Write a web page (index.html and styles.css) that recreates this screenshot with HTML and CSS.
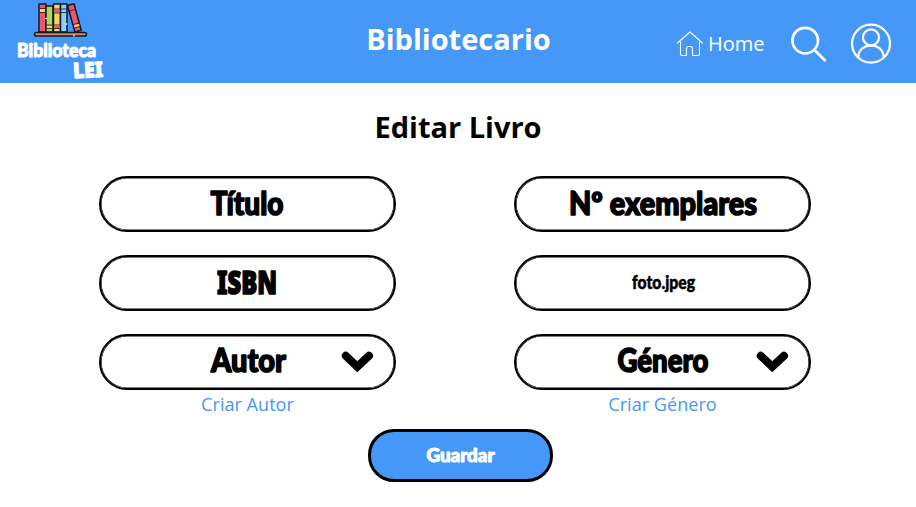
FILE: index.html
```html
<!DOCTYPE html>
<html lang="pt">
<head>
<meta charset="UTF-8">
<title>Editar Livro</title>
<link rel="stylesheet" href="styles.css">
</head>
<body>
<header class="topbar">
  <a class="brand">
    <svg width="120" height="83" viewBox="0 0 120 83">
      <g stroke="#111827" stroke-width="1.5" stroke-linejoin="round">
        <path fill="#ef5470" d="M39 4h7v28h-7z"/>
        <path fill="#acd957" d="M46 6h7v26h-7z"/>
        <path fill="#ffd25a" d="M53.5 4h7v28h-7z"/>
        <path fill="#8fd0f5" d="M60.500 4h6.500v28h-6.500z"/>
        <path fill="#ef5470" d="M67.500 5.500l6.500-1.700 7.200 26.500-6.300 1.700z"/>
        <rect fill="#d18b55" x="34.500" y="32.500" width="52" height="3.600" rx="1.800"/>
      </g>
      <path fill="#ffd25a" d="M40 9h5v3h-5zM47 26h5v2h-5zM74 25l5-1.300.7 2.500-5 1.300z"/>
      <path fill="#ef5470" d="M54.300 10h5.500v2.500h-5.500zM54.300 26h5.500v2h-5.500z"/>
      <path stroke="#111827" stroke-width=".8" d="M40 8.500h5M40 12.500h5M47 25h5M47 28.500h5M54 9h6M54 13h6M54 25h6M54 28.500h6M61 9h6M61 12.500h6M70 11l5-1.500M73.500 24.500l5.500-1.500M74.500 28l5.500-1.500"/>
      <path fill="#fff" d="M46 17.500l1.500 1-1.500 1-1-1zM66.500 23l1 1-1 1-1-1zM74 34.500l1 1.300-1 1-1-1z"/>
      <g class="hand light">
        <text x="17" y="57" font-size="19.500" textLength="79" lengthAdjust="spacingAndGlyphs">Biblioteca</text>
        <text class="slab" x="73" y="77.500" font-size="21.500" textLength="30" lengthAdjust="spacingAndGlyphs" transform="rotate(-3 88 70)">LEI</text>
      </g>
    </svg>
  </a>
  <div class="area">Bibliotecario</div>
  <nav class="nav">
    <a class="home">
      <svg width="28" height="28" viewBox="0 0 28 28" fill="none" stroke="#fff" stroke-width="1.100" stroke-linejoin="round" stroke-linecap="round"><path d="M1.500 13L14 2l12.500 11M4.500 12v12q0 1.500 1.500 1.500h4.500v-7q0-2 2-2h2q2 0 2 2v7H22q1.500 0 1.500-1.500V12"/></svg>
      <span>Home</span>
    </a>
    <svg class="search" width="38" height="38" viewBox="0 0 38 38" fill="none" stroke="#fff" stroke-width="2.700" stroke-linecap="round"><circle cx="15.200" cy="15.600" r="12.800"/><path d="M24.500 25l10.300 10.300"/></svg>
    <svg class="user" width="42" height="42" viewBox="0 0 42 42" fill="none" stroke="#fff" stroke-width="2.200"><circle cx="21" cy="20.600" r="19"/><circle cx="21" cy="14.400" r="8"/><path d="M8.200 34.500C8.500 26.500 14.500 22.300 21 22.300S33.500 26.500 33.800 34.500"/></svg>
  </nav>
</header>
<main>
  <h1>Editar Livro</h1>
  <form class="fields">
    <div class="field"><svg class="hand" width="292" height="50"><text x="109.500" y="36.500" textLength="73" lengthAdjust="spacingAndGlyphs">Título</text></svg></div>
    <div class="field"><svg class="hand" width="292" height="50"><text x="53" y="36.500" textLength="188" lengthAdjust="spacingAndGlyphs">Nº exemplares</text></svg></div>
    <div class="field"><svg class="hand" width="292" height="50"><text class="slab" x="116" y="36.500" textLength="60" lengthAdjust="spacingAndGlyphs">ISBN</text></svg></div>
    <div class="field"><svg class="hand small" width="292" height="50"><text x="116" y="31.500" textLength="63" lengthAdjust="spacingAndGlyphs">foto.jpeg</text></svg></div>
    <div class="field"><svg class="hand" width="292" height="50"><text x="110" y="36" textLength="75" lengthAdjust="spacingAndGlyphs">Autor</text><path class="chevron" d="M244.800 19.800L256.300 30.700L268 19.800"/></svg></div>
    <div class="field"><svg class="hand" width="292" height="50"><text x="101.500" y="36" textLength="91" lengthAdjust="spacingAndGlyphs">Género</text><path class="chevron" d="M244.800 19.800L256.300 30.700L268 19.800"/></svg></div>
  </form>
  <div class="links"><a>Criar Autor</a><a>Criar Género</a></div>
  <button class="save" type="button"><svg class="hand light" width="179" height="47"><text x="55.500" y="30" font-size="18.500" textLength="68" lengthAdjust="spacingAndGlyphs">Guardar</text></svg></button>
</main>
</body>
</html>
```
FILE: styles.css
```css
* { box-sizing: border-box; }
body {
  margin: 0;
  height: 507px;
  overflow: hidden;
  background: #fff;
  color: #000;
  font-family: "Open Sans", "Noto Sans", sans-serif;
}
svg { display: block; flex: none; }
.topbar {
  height: 83.400px;
  background: #4598f7;
  color: #fff;
  display: grid;
  grid-template-columns: 300px 317px 299px;
}
.area {
  text-align: center;
  font-size: 29px;
  font-weight: 700;
  line-height: 40px;
  padding-top: 19px;
}
.nav { display: flex; padding-left: 59px; }
.home {
  display: flex;
  width: 114px;
  padding-top: 30px;
  font-size: 20px;
  font-weight: 500;
  line-height: 28px;
  gap: 4px;
}
.search { margin-top: 25px; }
.user { margin: 23px 0 0 22px; }
.hand text {
  font-family: "Lato", sans-serif;
  font-weight: 900;
}
.hand text.slab { font-family: "Noto Sans", sans-serif; }
.hand {
  fill: #000;
  stroke: #000;
  stroke-width: 1.600px;
  stroke-linejoin: round;
  stroke-linecap: round;
  font-size: 32px;
}
.hand.light { fill: #fff; stroke: #fff; stroke-width: 1px; }
.hand.small { font-size: 18px; stroke-width: .500px; }
.hand .chevron { fill: none; stroke-width: 8px; stroke-linejoin: miter; }
h1 {
  margin: 0;
  padding-top: 23px;
  text-align: center;
  font-size: 29px;
  line-height: 41px;
  height: 92.400px;
}
.fields {
  display: grid;
  grid-template-columns: 297px 297px;
  column-gap: 118px;
  row-gap: 23px;
  padding-left: 99px;
}
.field {
  height: 56px;
  border: 2px solid #000;
  border-radius: 28px;
  box-shadow: inset 0 0 0 .600px #000;
  overflow: hidden;
}
.links {
  display: grid;
  grid-template-columns: 297px 297px;
  column-gap: 118px;
  padding-left: 99px;
  height: 38px;
  text-align: center;
  color: #4598f7;
  font-size: 18.100px;
  line-height: 29px;
}
.save {
  display: block;
  width: 185px;
  height: 53px;
  margin: 1px 0 0 368px;
  padding: 0;
  background: #4598f7;
  border: 3px solid #000;
  border-radius: 26px;
}
```
